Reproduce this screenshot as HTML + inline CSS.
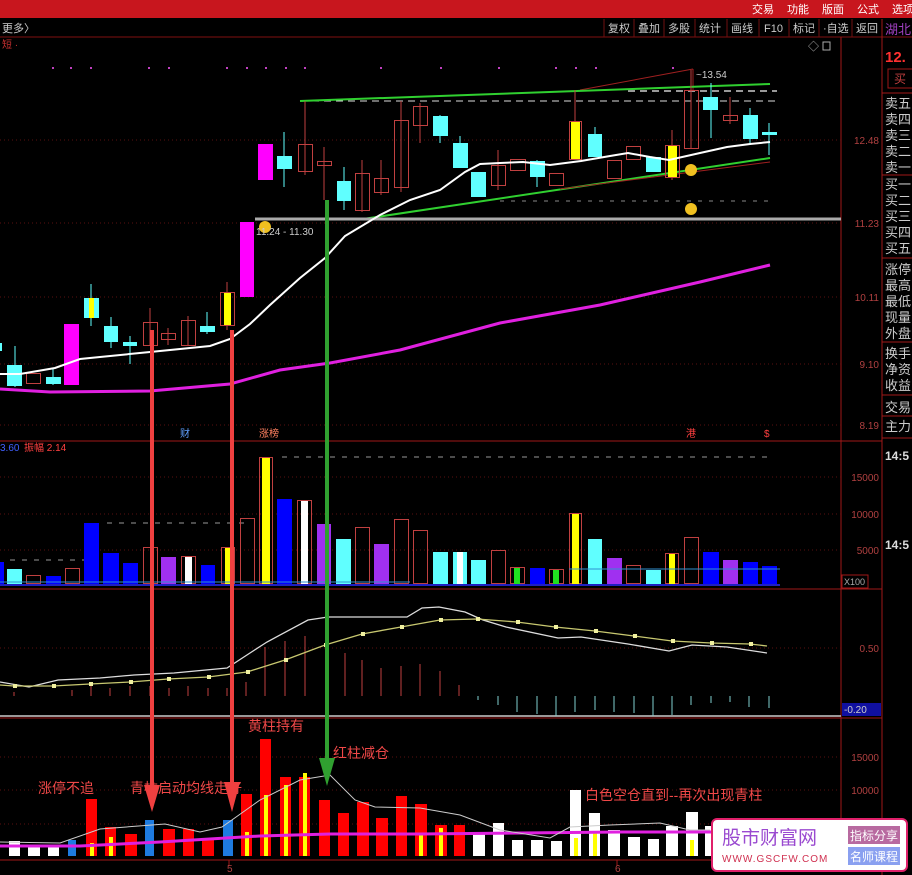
<!DOCTYPE html>
<html><head><meta charset="utf-8"><style>
html,body{margin:0;padding:0;background:#000;width:912px;height:875px;overflow:hidden}
svg{display:block}
text{font-family:"Liberation Sans","Noto Sans CJK SC",sans-serif}
</style></head><body>
<svg width="912" height="875" viewBox="0 0 912 875" xmlns="http://www.w3.org/2000/svg">
<rect width="912" height="875" fill="#000"/>
<!-- top bar -->
<rect x="0" y="0" width="912" height="18" fill="#c8161e"/>
<g fill="#fff" font-size="11"><text x="752" y="13">交易</text><text x="787" y="13">功能</text><text x="822" y="13">版面</text><text x="857" y="13">公式</text><text x="892" y="13">选项</text></g>
<!-- toolbar -->
<line x1="0" y1="37" x2="912" y2="37" stroke="#801010"/>
<text x="2" y="32" fill="#ccc" font-size="11">更多〉</text>
<g fill="#ccc" font-size="11"><text x="608" y="32">复权</text><text x="638" y="32">叠加</text><text x="668" y="32">多股</text><text x="699" y="32">统计</text><text x="731" y="32">画线</text><text x="764" y="32">F10</text><text x="793" y="32">标记</text><text x="823" y="32">·自选</text><text x="856" y="32">返回</text></g>
<g stroke="#701010"><line x1="604" y1="19" x2="604" y2="37"/><line x1="634" y1="19" x2="634" y2="37"/><line x1="664" y1="19" x2="664" y2="37"/><line x1="695" y1="19" x2="695" y2="37"/><line x1="727" y1="19" x2="727" y2="37"/><line x1="759" y1="19" x2="759" y2="37"/><line x1="789" y1="19" x2="789" y2="37"/><line x1="819" y1="19" x2="819" y2="37"/><line x1="852" y1="19" x2="852" y2="37"/></g>
<!-- frame lines -->
<g stroke="#a01818"><line x1="841" y1="37" x2="841" y2="860"/><line x1="882" y1="19" x2="882" y2="875"/><line x1="0" y1="441" x2="882" y2="441"/><line x1="0" y1="589" x2="882" y2="589"/><line x1="0" y1="718" x2="882" y2="718"/><line x1="0" y1="860" x2="882" y2="860"/></g>
<text x="2" y="48" fill="#c83030" font-size="10">短 ·</text>
<text x="808" y="50" fill="#aaa" font-size="11">◇</text><rect x="823" y="42" width="7" height="8" fill="none" stroke="#aaa"/>
<!-- grid dotted -->
<g stroke="#5a1010" stroke-dasharray="1 3"><line x1="0" y1="140" x2="841" y2="140"/><line x1="0" y1="223" x2="841" y2="223"/><line x1="0" y1="297" x2="841" y2="297"/><line x1="0" y1="364" x2="841" y2="364"/><line x1="0" y1="425" x2="841" y2="425"/><line x1="0" y1="477" x2="841" y2="477"/><line x1="0" y1="514" x2="841" y2="514"/><line x1="0" y1="550" x2="841" y2="550"/><line x1="0" y1="648" x2="841" y2="648"/><line x1="0" y1="757" x2="841" y2="757"/><line x1="0" y1="790" x2="841" y2="790"/><line x1="0" y1="824" x2="841" y2="824"/></g>
<g fill="#b04040" font-size="10" text-anchor="end"><text x="879" y="144">12.48</text><text x="879" y="227">11.23</text><text x="879" y="301">10.11</text><text x="879" y="368">9.10</text><text x="879" y="429">8.19</text><text x="879" y="481">15000</text><text x="879" y="518">10000</text><text x="879" y="554">5000</text><text x="879" y="652">0.50</text><text x="879" y="761">15000</text><text x="879" y="794">10000</text></g>
<rect x="842" y="575" width="26" height="13" fill="none" stroke="#a01818"/><text x="844" y="585" fill="#aaa" font-size="9">X100</text>
<rect x="842" y="703" width="39" height="13" fill="#1010a0"/><text x="844" y="713" fill="#ccc" font-size="10">-0.20</text>
<!-- sidebar -->
<text x="885" y="34" fill="#a040c0" font-size="13">湖北</text>
<text x="885" y="62" fill="#ff3030" font-size="15" font-weight="bold">12.</text>
<rect x="888" y="69" width="30" height="19" fill="none" stroke="#a01818"/><text x="894" y="83" fill="#c04040" font-size="12">买</text>
<g fill="#ccc" font-size="13"><text x="885" y="108">卖五</text><text x="885" y="124">卖四</text><text x="885" y="140">卖三</text><text x="885" y="156">卖二</text><text x="885" y="172">卖一</text><text x="885" y="189">买一</text><text x="885" y="205">买二</text><text x="885" y="221">买三</text><text x="885" y="237">买四</text><text x="885" y="253">买五</text><text x="885" y="274">涨停</text><text x="885" y="290">最高</text><text x="885" y="306">最低</text><text x="885" y="322">现量</text><text x="885" y="338">外盘</text><text x="885" y="358">换手</text><text x="885" y="374">净资</text><text x="885" y="390">收益</text><text x="885" y="412">交易</text><text x="885" y="431">主力</text></g>
<g stroke="#a01818"><line x1="882" y1="93" x2="912" y2="93"/><line x1="882" y1="175" x2="912" y2="175"/><line x1="882" y1="258" x2="912" y2="258"/><line x1="882" y1="342" x2="912" y2="342"/><line x1="882" y1="395" x2="912" y2="395"/><line x1="882" y1="416" x2="912" y2="416"/><line x1="882" y1="438" x2="912" y2="438"/></g>
<g fill="#ddd" font-size="12" font-weight="bold"><text x="885" y="460">14:5</text><text x="885" y="549">14:5</text></g>
<!-- purple dots -->
<g fill="#c040c0"><rect x="52" y="67" width="2" height="2"/><rect x="70" y="67" width="2" height="2"/><rect x="90" y="67" width="2" height="2"/><rect x="148" y="67" width="2" height="2"/><rect x="168" y="67" width="2" height="2"/><rect x="226" y="67" width="2" height="2"/><rect x="246" y="67" width="2" height="2"/><rect x="265" y="67" width="2" height="2"/><rect x="285" y="67" width="2" height="2"/><rect x="304" y="67" width="2" height="2"/><rect x="380" y="67" width="2" height="2"/><rect x="440" y="67" width="2" height="2"/><rect x="498" y="67" width="2" height="2"/><rect x="555" y="67" width="2" height="2"/><rect x="575" y="67" width="2" height="2"/><rect x="595" y="67" width="2" height="2"/><rect x="672" y="67" width="2" height="2"/></g>
<!-- trend lines -->
<line x1="580" y1="90" x2="693" y2="69" stroke="#a02020"/><line x1="693" y1="69" x2="693" y2="90" stroke="#a02020"/>
<text x="696" y="78" fill="#ccc" font-size="10">~13.54</text>
<line x1="300" y1="101" x2="777" y2="101" stroke="#ddd" stroke-dasharray="7 5"/>
<line x1="628" y1="91" x2="777" y2="91" stroke="#999" stroke-dasharray="7 5" stroke-width="2"/>
<line x1="500" y1="201" x2="770" y2="201" stroke="#888" stroke-dasharray="4 7"/>
<line x1="300" y1="101" x2="770" y2="84" stroke="#30d030" stroke-width="2"/>
<line x1="363" y1="219" x2="770" y2="158" stroke="#30d030" stroke-width="2"/>
<line x1="560" y1="189" x2="770" y2="162" stroke="#a02020"/>
<line x1="255" y1="219" x2="841" y2="219" stroke="#aaa" stroke-width="3"/>
<!-- candles: wicks -->
<g stroke-width="1">
<line x1="15" y1="346" x2="15" y2="387" stroke="#60ffff"/><line x1="53" y1="368" x2="53" y2="385" stroke="#60ffff"/>
<line x1="91" y1="284" x2="91" y2="326" stroke="#60ffff"/><line x1="111" y1="317" x2="111" y2="348" stroke="#60ffff"/><line x1="130" y1="336" x2="130" y2="364" stroke="#60ffff"/>
<line x1="150" y1="308" x2="150" y2="346" stroke="#c04040"/><line x1="168" y1="328" x2="168" y2="345" stroke="#c04040"/><line x1="188" y1="316" x2="188" y2="346" stroke="#c04040"/>
<line x1="207" y1="312" x2="207" y2="334" stroke="#60ffff"/><line x1="227" y1="282" x2="227" y2="330" stroke="#c04040"/>
<line x1="284" y1="132" x2="284" y2="187" stroke="#60ffff"/><line x1="305" y1="101" x2="305" y2="175" stroke="#c04040"/><line x1="324" y1="147" x2="324" y2="200" stroke="#c04040"/>
<line x1="344" y1="167" x2="344" y2="210" stroke="#60ffff"/><line x1="362" y1="160" x2="362" y2="212" stroke="#c04040"/><line x1="381" y1="160" x2="381" y2="195" stroke="#c04040"/>
<line x1="401" y1="101" x2="401" y2="192" stroke="#c04040"/><line x1="420" y1="103" x2="420" y2="143" stroke="#c04040"/><line x1="440" y1="115" x2="440" y2="143" stroke="#60ffff"/>
<line x1="460" y1="136" x2="460" y2="168" stroke="#60ffff"/><line x1="498" y1="150" x2="498" y2="190" stroke="#c04040"/><line x1="537" y1="160" x2="537" y2="187" stroke="#60ffff"/>
<line x1="575" y1="90" x2="575" y2="160" stroke="#c04040"/><line x1="595" y1="127" x2="595" y2="157" stroke="#60ffff"/><line x1="672" y1="130" x2="672" y2="180" stroke="#c04040"/>
<line x1="691" y1="70" x2="691" y2="149" stroke="#c04040"/><line x1="711" y1="83" x2="711" y2="138" stroke="#60ffff"/><line x1="730" y1="97" x2="730" y2="124" stroke="#c04040"/>
<line x1="750" y1="108" x2="750" y2="143" stroke="#60ffff"/><line x1="769" y1="123" x2="769" y2="155" stroke="#60ffff"/>
</g>
<!-- candle bodies -->
<g>
<rect x="0" y="343" width="2" height="8" fill="#60ffff"/>
<rect x="7" y="365" width="15" height="21" fill="#60ffff"/>
<rect x="26.5" y="373.5" width="14" height="10" fill="none" stroke="#c04040"/>
<rect x="46" y="377" width="15" height="7" fill="#60ffff"/>
<rect x="64" y="324" width="15" height="61" fill="#ff00ff"/>
<rect x="84" y="298" width="15" height="20" fill="#60ffff"/><rect x="89" y="298" width="5" height="20" fill="#ffff00"/>
<rect x="104" y="326" width="14" height="16" fill="#60ffff"/>
<rect x="123" y="342" width="14" height="4" fill="#60ffff"/>
<rect x="143.5" y="322.5" width="14" height="23" fill="none" stroke="#c04040"/>
<rect x="161.5" y="333.5" width="14" height="6" fill="none" stroke="#c04040"/>
<rect x="181.5" y="320.5" width="14" height="25" fill="none" stroke="#c04040"/>
<rect x="200" y="326" width="15" height="6" fill="#60ffff"/>
<rect x="220.5" y="292.5" width="14" height="33" fill="none" stroke="#c04040"/><rect x="224" y="293" width="7" height="32" fill="#ffff00"/>
<rect x="240" y="222" width="14" height="75" fill="#ff00ff"/>
<rect x="258" y="144" width="15" height="36" fill="#ff00ff"/>
<rect x="277" y="156" width="15" height="13" fill="#60ffff"/>
<rect x="298.5" y="144.5" width="14" height="27" fill="none" stroke="#c04040"/>
<rect x="317.5" y="161.5" width="14" height="4" fill="none" stroke="#c04040"/>
<rect x="337" y="181" width="14" height="20" fill="#60ffff"/>
<rect x="355.5" y="173.5" width="14" height="37" fill="none" stroke="#c04040"/>
<rect x="374.5" y="178.5" width="14" height="14" fill="none" stroke="#c04040"/>
<rect x="394.5" y="120.5" width="14" height="67" fill="none" stroke="#c04040"/>
<rect x="413.5" y="106.5" width="14" height="19" fill="none" stroke="#c04040"/>
<rect x="433" y="116" width="15" height="20" fill="#60ffff"/>
<rect x="453" y="143" width="15" height="25" fill="#60ffff"/>
<rect x="471" y="172" width="15" height="25" fill="#60ffff"/>
<rect x="491.5" y="165.5" width="14" height="20" fill="none" stroke="#c04040"/>
<rect x="510.5" y="159.5" width="15" height="11" fill="none" stroke="#c04040"/>
<rect x="530" y="161" width="15" height="16" fill="#60ffff"/>
<rect x="549.5" y="173.5" width="14" height="12" fill="none" stroke="#c04040"/>
<rect x="569.5" y="121.5" width="12" height="38" fill="none" stroke="#c04040"/><rect x="571" y="122" width="9" height="37" fill="#ffff00"/>
<rect x="588" y="134" width="14" height="23" fill="#60ffff"/>
<rect x="607.5" y="160.5" width="14" height="18" fill="none" stroke="#c04040"/>
<rect x="626.5" y="146.5" width="14" height="13" fill="none" stroke="#c04040"/>
<rect x="646" y="157" width="15" height="15" fill="#60ffff"/>
<rect x="665.5" y="145.5" width="14" height="32" fill="none" stroke="#c04040"/><rect x="668" y="146" width="9" height="31" fill="#ffff00"/>
<rect x="684.5" y="90.5" width="14" height="58" fill="none" stroke="#c04040"/>
<rect x="703" y="97" width="15" height="13" fill="#60ffff"/>
<rect x="723.5" y="115.5" width="14" height="5" fill="none" stroke="#c04040"/>
<rect x="743" y="115" width="15" height="24" fill="#60ffff"/>
<rect x="762" y="132" width="15" height="3" fill="#60ffff"/>
</g>
<!-- MAs -->
<polyline fill="none" stroke="#fff" stroke-width="2" points="0,374 20,374 55,368 80,359 100,357 150,352 210,346 230,339 250,324 270,305 300,278 325,258 345,236 380,215 410,200 440,190 465,172 480,164 500,163 523,162 550,165 581,161 610,156 628,153 650,157 669,160 700,153 727,147 750,144 770,142"/>
<polyline fill="none" stroke="#e020e0" stroke-width="3" points="0,389 50,392 150,391 230,384 280,370 330,363 400,350 500,323 600,305 700,282 770,265"/>
<!-- smileys -->
<g fill="#f0c020"><circle cx="691" cy="170" r="6"/><circle cx="691" cy="209" r="6"/><circle cx="265" cy="227" r="6"/></g>
<text x="256" y="235" fill="#ccc" font-size="10">11.24 - 11.30</text>
<!-- markers -->
<text x="180" y="437" fill="#60a0ff" font-size="10">财</text>
<text x="259" y="437" fill="#ff8060" font-size="10">涨榜</text>
<text x="686" y="437" fill="#ff4040" font-size="10">港</text>
<text x="764" y="437" fill="#ff4040" font-size="10">$</text>
<!-- volume panel -->
<text x="0" y="451" fill="#4060ff" font-size="10">3.60</text><text x="24" y="451" fill="#ff4040" font-size="10">振幅  2.14</text>
<g stroke="#999" stroke-dasharray="5 7"><line x1="282" y1="457" x2="772" y2="457"/><line x1="107" y1="523" x2="250" y2="523"/><line x1="10" y1="560" x2="95" y2="560"/></g>
<g>
<rect x="0" y="562" width="4" height="22" fill="#0000ff"/>
<rect x="7" y="569" width="15" height="15" fill="#60ffff"/>
<rect x="26.5" y="575.5" width="14" height="8" fill="none" stroke="#c04040"/>
<rect x="46" y="576" width="15" height="8" fill="#0000ff"/>
<rect x="65.5" y="568.5" width="14" height="15" fill="none" stroke="#c04040"/>
<rect x="84" y="523" width="15" height="61" fill="#0000ff"/>
<rect x="103" y="553" width="16" height="31" fill="#0000ff"/>
<rect x="123" y="563" width="15" height="21" fill="#0000ff"/>
<rect x="143.5" y="547.5" width="14" height="36" fill="none" stroke="#c04040"/>
<rect x="161" y="557" width="15" height="27" fill="#a030f0"/>
<rect x="181.5" y="556.5" width="14" height="27" fill="none" stroke="#c04040"/><rect x="185" y="557" width="7" height="27" fill="#fff"/>
<rect x="201" y="565" width="14" height="19" fill="#0000ff"/>
<rect x="221.5" y="547.5" width="13" height="36" fill="none" stroke="#c04040"/><rect x="225" y="548" width="6" height="36" fill="#ffff00"/>
<rect x="240.5" y="518.5" width="14" height="65" fill="none" stroke="#c04040"/>
<rect x="259.5" y="457.5" width="13" height="126" fill="none" stroke="#c04040"/><rect x="262" y="458" width="8" height="126" fill="#ffff00"/>
<rect x="277" y="499" width="15" height="85" fill="#0000ff"/>
<rect x="297.5" y="500.5" width="14" height="83" fill="none" stroke="#c04040"/><rect x="301" y="501" width="7" height="83" fill="#fff"/>
<rect x="317" y="524" width="14" height="60" fill="#a030f0"/>
<rect x="336" y="539" width="15" height="45" fill="#60ffff"/>
<rect x="355.5" y="527.5" width="14" height="56" fill="none" stroke="#c04040"/>
<rect x="374" y="544" width="15" height="40" fill="#a030f0"/>
<rect x="394.5" y="519.5" width="14" height="64" fill="none" stroke="#c04040"/>
<rect x="413.5" y="530.5" width="14" height="53" fill="none" stroke="#c04040"/>
<rect x="433" y="552" width="15" height="32" fill="#60ffff"/>
<rect x="453" y="552" width="14" height="32" fill="#60ffff"/><rect x="457" y="552" width="6" height="32" fill="#fff"/>
<rect x="471" y="560" width="15" height="24" fill="#60ffff"/>
<rect x="491.5" y="550.5" width="14" height="33" fill="none" stroke="#c04040"/>
<rect x="510.5" y="567.5" width="14" height="16" fill="none" stroke="#c04040"/><rect x="514" y="568" width="6" height="16" fill="#20e020"/>
<rect x="530" y="568" width="15" height="16" fill="#0000ff"/>
<rect x="549.5" y="569.5" width="14" height="14" fill="none" stroke="#c04040"/><rect x="553" y="570" width="6" height="14" fill="#20e020"/>
<rect x="569.5" y="513.5" width="12" height="70" fill="none" stroke="#c04040"/><rect x="572" y="514" width="7" height="70" fill="#ffff00"/>
<rect x="588" y="539" width="14" height="45" fill="#60ffff"/>
<rect x="607" y="558" width="15" height="26" fill="#a030f0"/>
<rect x="626.5" y="565.5" width="14" height="18" fill="none" stroke="#c04040"/>
<rect x="646" y="570" width="15" height="14" fill="#60ffff"/>
<rect x="665.5" y="553.5" width="13" height="30" fill="none" stroke="#c04040"/><rect x="669" y="554" width="6" height="30" fill="#ffff00"/>
<rect x="684.5" y="537.5" width="14" height="46" fill="none" stroke="#c04040"/>
<rect x="703" y="552" width="16" height="32" fill="#0000ff"/>
<rect x="723" y="560" width="15" height="24" fill="#a030f0"/>
<rect x="743" y="562" width="15" height="22" fill="#0000ff"/>
<rect x="762" y="566" width="15" height="18" fill="#0000ff"/>
</g>
<line x1="0" y1="582" x2="410" y2="582" stroke="#3090d0"/><line x1="569" y1="569" x2="780" y2="569" stroke="#3090d0"/>
<line x1="0" y1="585" x2="780" y2="585" stroke="#2020c0" stroke-width="2"/>
<!-- MACD -->
<line x1="0" y1="716" x2="841" y2="716" stroke="#999" stroke-width="2"/>
<g stroke="#c04040">
<line x1="14" y1="696" x2="14" y2="692"/><line x1="72" y1="696" x2="72" y2="690"/><line x1="91" y1="696" x2="91" y2="686"/><line x1="110" y1="696" x2="110" y2="688"/><line x1="130" y1="696" x2="130" y2="686"/><line x1="150" y1="696" x2="150" y2="686"/><line x1="169" y1="696" x2="169" y2="688"/><line x1="188" y1="696" x2="188" y2="686"/><line x1="208" y1="696" x2="208" y2="688"/><line x1="227" y1="696" x2="227" y2="688"/><line x1="246" y1="696" x2="246" y2="682"/>
<line x1="265" y1="696" x2="265" y2="647"/><line x1="285" y1="696" x2="285" y2="641"/><line x1="305" y1="696" x2="305" y2="636"/><line x1="326" y1="696" x2="326" y2="646"/><line x1="345" y1="696" x2="345" y2="653"/><line x1="362" y1="696" x2="362" y2="660"/><line x1="381" y1="696" x2="381" y2="668"/><line x1="401" y1="696" x2="401" y2="666"/><line x1="420" y1="696" x2="420" y2="664"/><line x1="440" y1="696" x2="440" y2="671"/><line x1="459" y1="696" x2="459" y2="685"/>
</g>
<g stroke="#80d0d0">
<line x1="478" y1="696" x2="478" y2="700"/><line x1="498" y1="696" x2="498" y2="705"/><line x1="517" y1="696" x2="517" y2="712"/><line x1="537" y1="696" x2="537" y2="714"/><line x1="556" y1="696" x2="556" y2="716"/><line x1="575" y1="696" x2="575" y2="712"/><line x1="595" y1="696" x2="595" y2="710"/><line x1="614" y1="696" x2="614" y2="712"/><line x1="634" y1="696" x2="634" y2="713"/><line x1="653" y1="696" x2="653" y2="716"/><line x1="672" y1="696" x2="672" y2="715"/><line x1="691" y1="696" x2="691" y2="705"/><line x1="711" y1="696" x2="711" y2="703"/><line x1="730" y1="696" x2="730" y2="702"/><line x1="749" y1="696" x2="749" y2="707"/><line x1="769" y1="696" x2="769" y2="708"/>
</g>
<polyline fill="none" stroke="#ddd" stroke-width="1.3" points="0,682 29,687 58,680 100,678 134,675 174,673 227,668 250,653 267,642 308,620 328,617 380,617 407,617 422,608 439,607 465,612 483,620 506,627 558,638 581,637 628,644 669,651 692,645 727,647 767,653"/>
<polyline fill="none" stroke="#c8c870" stroke-width="1.3" points="0,685 14,686 53,686 90,684 130,682 168,679 208,677 247,672 285,660 325,645 362,634 401,627 440,620 477,619 517,622 555,627 595,631 634,636 672,641 711,643 750,644 767,646"/>
<g fill="#f0f0a0"><rect x="13" y="684" width="4" height="4"/><rect x="52" y="684" width="4" height="4"/><rect x="89" y="682" width="4" height="4"/><rect x="129" y="680" width="4" height="4"/><rect x="167" y="677" width="4" height="4"/><rect x="207" y="675" width="4" height="4"/><rect x="246" y="670" width="4" height="4"/><rect x="284" y="658" width="4" height="4"/><rect x="324" y="643" width="4" height="4"/><rect x="361" y="632" width="4" height="4"/><rect x="400" y="625" width="4" height="4"/><rect x="439" y="618" width="4" height="4"/><rect x="476" y="617" width="4" height="4"/><rect x="516" y="620" width="4" height="4"/><rect x="554" y="625" width="4" height="4"/><rect x="594" y="629" width="4" height="4"/><rect x="633" y="634" width="4" height="4"/><rect x="671" y="639" width="4" height="4"/><rect x="710" y="641" width="4" height="4"/><rect x="749" y="642" width="4" height="4"/></g>
<!-- bottom panel bars -->
<g>
<rect x="9" y="841" width="11" height="15" fill="#fff"/><rect x="28" y="847" width="12" height="9" fill="#fff"/><rect x="48" y="847" width="11" height="9" fill="#fff"/>
<rect x="68" y="840" width="8" height="16" fill="#1e7be0"/>
<rect x="86" y="799" width="11" height="57" fill="#ff0000"/><rect x="90" y="843" width="4" height="13" fill="#ffff00"/>
<rect x="105" y="827" width="11" height="29" fill="#ff0000"/><rect x="109" y="837" width="4" height="19" fill="#ffff00"/>
<rect x="125" y="834" width="12" height="22" fill="#ff0000"/>
<rect x="145" y="820" width="9" height="36" fill="#1e7be0"/>
<rect x="163" y="829" width="12" height="27" fill="#ff0000"/><rect x="183" y="829" width="11" height="27" fill="#ff0000"/><rect x="202" y="838" width="12" height="18" fill="#ff0000"/>
<rect x="223" y="820" width="10" height="36" fill="#1e7be0"/>
<rect x="241" y="794" width="11" height="62" fill="#ff0000"/><rect x="245" y="832" width="4" height="24" fill="#ffff00"/>
<rect x="260" y="739" width="11" height="117" fill="#ff0000"/><rect x="264" y="795" width="4" height="61" fill="#ffff00"/>
<rect x="280" y="777" width="11" height="79" fill="#ff0000"/><rect x="284" y="785" width="4" height="71" fill="#ffff00"/>
<rect x="299" y="777" width="11" height="79" fill="#ff0000"/><rect x="303" y="773" width="4" height="83" fill="#ffff00"/>
<rect x="319" y="800" width="11" height="56" fill="#ff0000"/><rect x="338" y="813" width="11" height="43" fill="#ff0000"/><rect x="357" y="802" width="12" height="54" fill="#ff0000"/><rect x="376" y="818" width="12" height="38" fill="#ff0000"/><rect x="396" y="796" width="11" height="60" fill="#ff0000"/>
<rect x="415" y="804" width="12" height="52" fill="#ff0000"/><rect x="419" y="833" width="4" height="23" fill="#ffff00"/>
<rect x="435" y="825" width="12" height="31" fill="#ff0000"/><rect x="439" y="828" width="4" height="28" fill="#ffff00"/>
<rect x="454" y="825" width="11" height="31" fill="#ff0000"/>
<rect x="473" y="833" width="12" height="23" fill="#fff"/><rect x="493" y="823" width="11" height="33" fill="#fff"/><rect x="512" y="840" width="11" height="16" fill="#fff"/><rect x="531" y="840" width="12" height="16" fill="#fff"/><rect x="551" y="841" width="11" height="15" fill="#fff"/>
<rect x="570" y="790" width="11" height="66" fill="#fff"/><rect x="574" y="838" width="4" height="18" fill="#ffff00"/>
<rect x="589" y="813" width="11" height="43" fill="#fff"/><rect x="593" y="833" width="4" height="23" fill="#ffff00"/>
<rect x="608" y="830" width="12" height="26" fill="#fff"/><rect x="628" y="837" width="12" height="19" fill="#fff"/><rect x="648" y="839" width="11" height="17" fill="#fff"/><rect x="666" y="826" width="12" height="30" fill="#fff"/>
<rect x="686" y="812" width="12" height="44" fill="#fff"/><rect x="690" y="840" width="4" height="16" fill="#ffff00"/>
<rect x="705" y="826" width="11" height="30" fill="#fff"/>
</g>
<polyline fill="none" stroke="#e020e0" stroke-width="3" points="0,846 80,846 160,842 260,836 330,834 420,834 520,833 620,832 720,832"/>
<polyline fill="none" stroke="#ccc" stroke-width="1" points="0,842 60,843 100,829 165,824 200,832 222,827 260,800 300,780 330,775 355,800 375,807 420,808 460,815 500,830 550,838 570,827 610,825 660,823 690,830 710,830"/>
<g stroke="#a01818"><line x1="229" y1="860" x2="229" y2="866"/><line x1="617" y1="860" x2="617" y2="866"/></g>
<text x="227" y="872" fill="#b04040" font-size="10">5</text><text x="615" y="872" fill="#b04040" font-size="10">6</text>
<!-- annotations -->
<g fill="#f04848" font-size="14"><text x="38" y="793">涨停不追</text><text x="130" y="793">青柱启动均线走好</text><text x="248" y="731">黄柱持有</text><text x="333" y="758">红柱减仓</text><text x="585" y="800">白色空仓直到--再次出现青柱</text></g>
<!-- arrows -->
<g fill="#f04040"><rect x="150" y="330" width="4" height="460"/><polygon points="144,785 160,785 152,812"/><rect x="230" y="330" width="4" height="455"/><polygon points="224,782 240,782 232,812"/></g>
<g fill="#30a030"><rect x="325" y="200" width="4" height="560"/><polygon points="319,758 335,758 327,786"/></g>
<!-- watermark -->
<rect x="712" y="819" width="195" height="52" rx="5" fill="#fff" stroke="#e0206a" stroke-width="2"/>
<text x="722" y="844" fill="#9a4ad0" font-size="19" font-family="Liberation Serif, Noto Serif CJK SC, serif">股市财富网</text>
<text x="722" y="862" fill="#d03050" font-size="10" font-family="Liberation Serif, serif" letter-spacing="1">WWW.GSCFW.COM</text>
<rect x="848" y="826" width="52" height="18" fill="#b86aa0"/><text x="850" y="840" fill="#fff" font-size="12">指标分享</text>
<rect x="848" y="847" width="52" height="18" fill="#8aa0f0"/><text x="850" y="861" fill="#fff" font-size="12">名师课程</text>
</svg>
</body></html>
